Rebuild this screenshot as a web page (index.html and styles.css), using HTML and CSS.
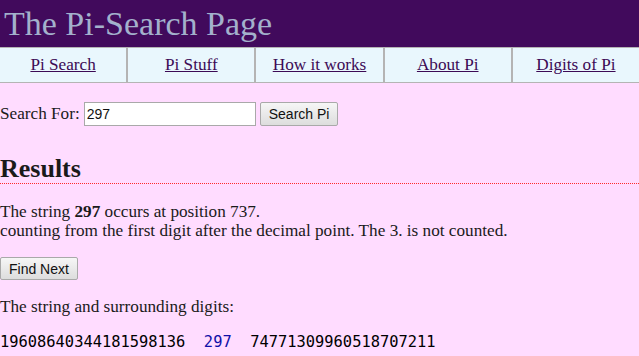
FILE: index.html
```html
<!DOCTYPE html>
<html lang="en">
<head>
    <meta charset="UTF-8">
    <title>The Pi-Search Page</title>
    <link rel="stylesheet" href="styles.css">
</head>
<body>
    <!-- Header -->
    <div class="header">
        <h1 class="title">The Pi-Search Page</h1>
    </div>

    <!-- Menu -->
    <div class="menu">
        <a class="menu-item" href="#">Pi Search</a>
        <a class="menu-item" href="#">Pi Stuff</a>
        <a class="menu-item" href="#">How it works</a>
        <a class="menu-item" href="#">About Pi</a>
        <a class="menu-item" href="#">Digits of Pi</a>
    </div>

    <div class="content">
        <form class="search-form">
            <label for="query">Search For:</label>
            <input type="text" id="query" class="search-input" value="297">
            <button type="button" class="btn">Search Pi</button>
        </form>

        <h2 class="results-title">Results</h2>

        <p class="result-text first">
            The string <b>297</b> occurs at position 737.<br>
            counting from the first digit after the decimal point. The 3. is not counted.
        </p>

        <button type="button" class="btn">Find Next</button>

        <p class="result-text">The string and surrounding digits:</p>

        <div class="digits">19608640344181598136&nbsp; <span class="match">297</span> &nbsp;74771309960518707211</div>
    </div>
</body>
</html>
```

FILE: styles.css
```css
* {
    box-sizing: border-box;
}

body {
    margin: 0;
    background: #ffdcff;
    color: #1a1a1a;
    font-family: "Liberation Serif", "Times New Roman", serif;
    font-size: 17.2px;
}

/* Header */
.header {
    background: #410a5c;
    height: 47px;
    padding-left: 4px;
}

.title {
    margin: 0;
    font-weight: normal;
    font-size: 34px;
    line-height: 47px;
    color: #a3b1cc;
}

/* Menu */
.menu {
    display: flex;
    background: #e9f7fd;
    border-top: 1px solid #b4b4b4;
    border-bottom: 1px solid #b4b4b4;
    height: 36px;
}

.menu-item {
    flex: 1;
    display: flex;
    align-items: center;
    justify-content: center;
    color: #3c0a55;
    font-size: 17.2px;
    border-left: 2px solid #b4b4b4;
}

.menu-item:first-child {
    border-left: none;
}

/* Content */
.search-form {
    margin: 19px 0 0;
    display: flex;
    align-items: center;
}

.search-input {
    margin-left: 4px;
    width: 172px;
    height: 24px;
    border: 1px solid #a9a9a9;
    background: #fff;
    font-family: "Liberation Sans", Arial, sans-serif;
    font-size: 14px;
    padding: 1px 2px;
    color: #111;
}

.btn {
    font-family: "Liberation Sans", Arial, sans-serif;
    font-size: 14px;
    color: #111;
    background: linear-gradient(#f6f6f6, #dddddd);
    border: 1px solid #a9a9a9;
    border-radius: 2px;
    height: 23px;
    padding: 0 8px;
}

.search-form .btn {
    margin-left: 4px;
    height: 24px;
}

.results-title {
    margin: 28px 0 0;
    font-size: 26px;
    line-height: 29px;
    border-bottom: 1px dotted #ff2a2a;
}

.result-text {
    margin: 17px 0;
    line-height: 19px;
}

.result-text.first {
    margin-top: 18px;
}

.digits {
    font-family: "DejaVu Sans Mono", Consolas, monospace;
    font-size: 15.4px;
    line-height: 18px;
    color: #000;
    margin-top: 17px;
}

.match {
    color: #1010a8;
}
```
